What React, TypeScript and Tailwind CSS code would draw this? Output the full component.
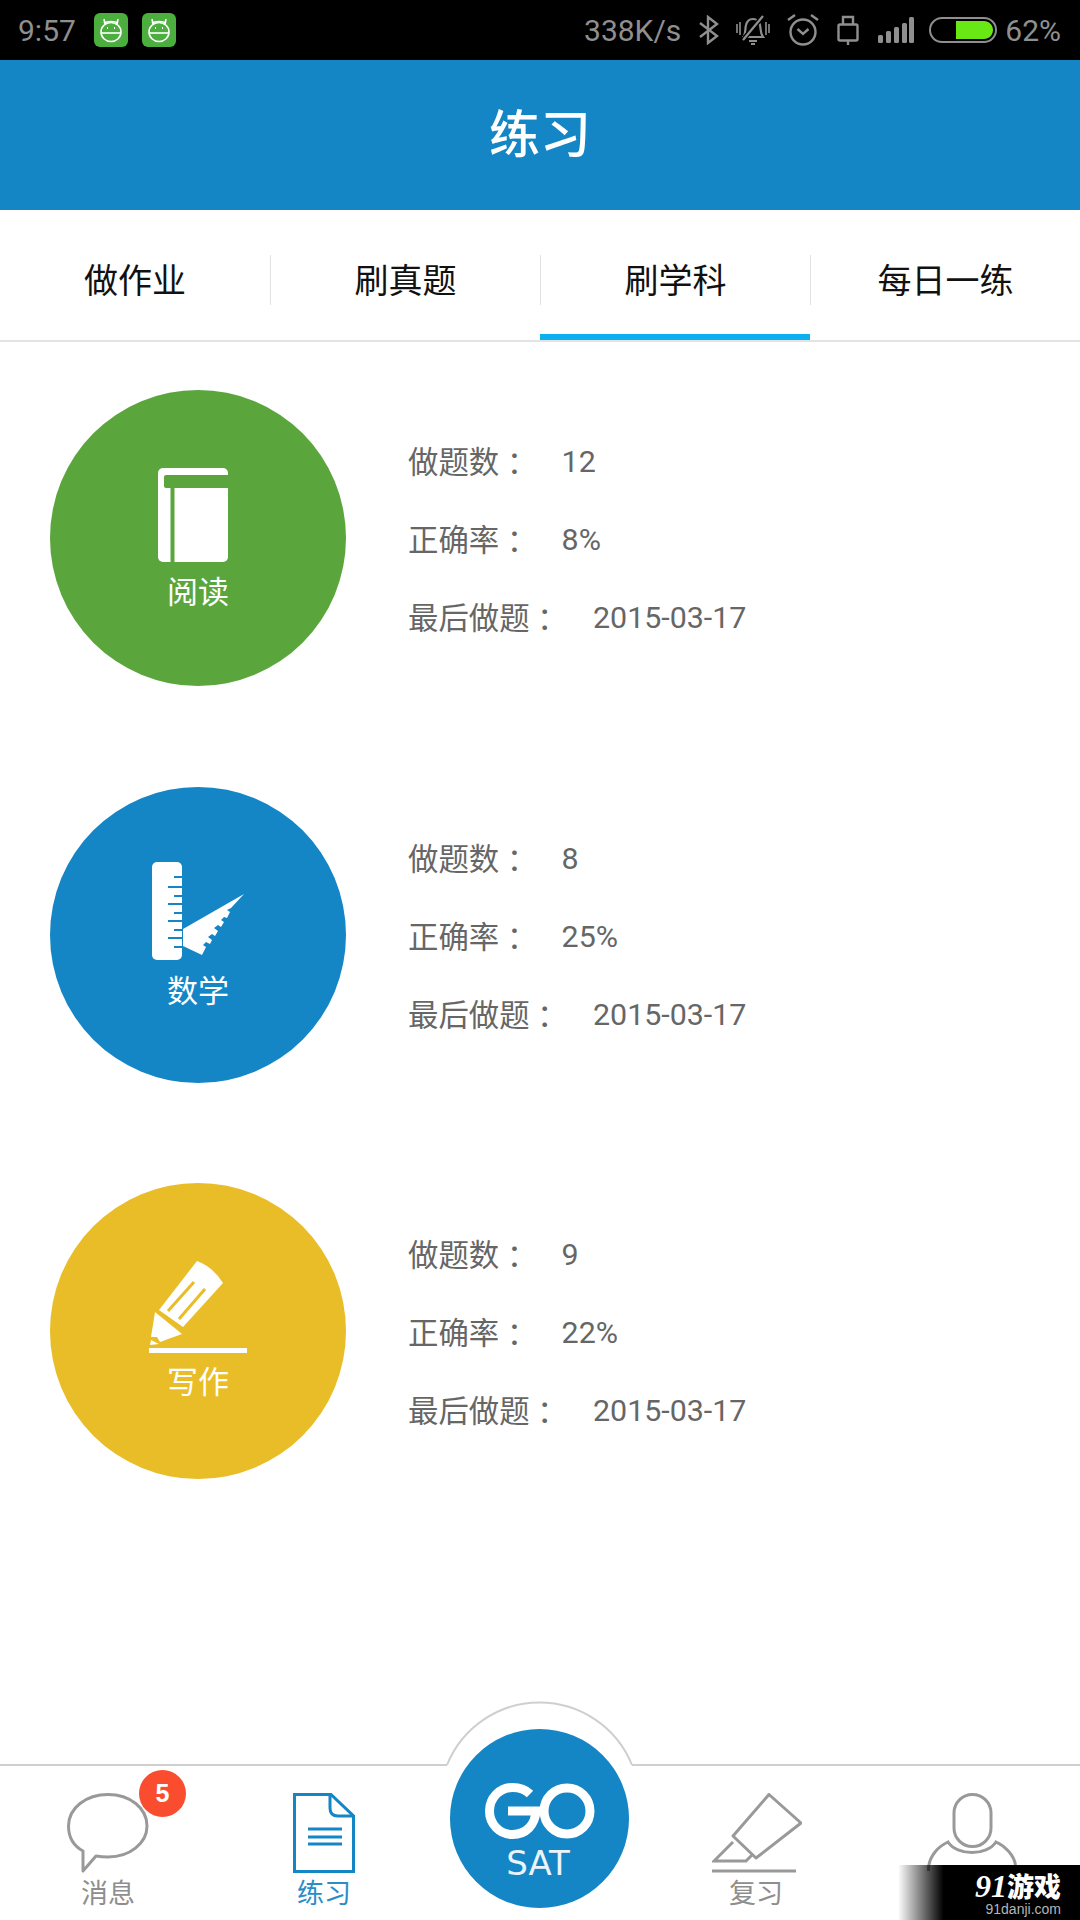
import React from "react";

const Bluetooth = () => (
  <svg width="21" height="30" viewBox="0 0 21 30" fill="none" stroke="#8f8f8f" strokeWidth="2.4" className="ml-[17px]">
    <path d="M2 8 L19 21 L10 28 V2 L19 9 L2 22" />
  </svg>
);
const Bell = () => (
  <svg width="34" height="31" viewBox="0 0 34 31" fill="none" stroke="#8f8f8f" strokeWidth="2.2" className="ml-[17px]">
    <path d="M8 21 C10 17 9 13 10 10 C11 6 14 4 17 4 C20 4 23 6 24 10 C25 14 24 18 27 22 H6" />
    <path d="M13 26 H21 M15 29 H19" />
    <path d="M1 9 V18 M4 7 V20 M30 7 V20 M33 9 V18" strokeWidth="1.6" />
    <path d="M6 26 L27 1" stroke="#000" strokeWidth="5" />
    <path d="M7 25 L27 1" />
  </svg>
);
const Alarm = () => (
  <svg width="32" height="32" viewBox="0 0 32 32" fill="none" stroke="#8f8f8f" strokeWidth="2.4" className="ml-[17px]">
    <circle cx="16" cy="18" r="12.5" />
    <path d="M10.5 15 L16 20 L21.5 15" />
    <path d="M1 6 L8 1 M31 6 L24 1" />
  </svg>
);
const Lock = () => (
  <svg width="22" height="30" viewBox="0 0 22 30" fill="none" stroke="#8f8f8f" strokeWidth="2.4" className="ml-[18px]">
    <rect x="1.5" y="9.5" width="19" height="16" rx="1.5" />
    <path d="M6 9 V2 H16 V9" />
    <path d="M11 26 V30" />
  </svg>
);
const Signal = () => (
  <svg width="36" height="26" viewBox="0 0 36 26" fill="#8f8f8f" className="ml-[19px]">
    <rect x="0" y="18" width="5" height="8" rx="1.5" />
    <rect x="8" y="14" width="5" height="12" rx="1.5" />
    <rect x="16" y="10" width="5" height="16" rx="1.5" />
    <rect x="24" y="6" width="5" height="20" rx="1.5" />
    <rect x="31" y="0" width="5" height="26" rx="1.5" />
  </svg>
);
const Battery = () => (
  <svg width="68" height="26" viewBox="0 0 68 26" fill="none" className="ml-[15px]">
    <rect x="1" y="1" width="66" height="24" rx="12" stroke="#8f8f8f" strokeWidth="2" />
    <path d="M27 4 H55 C60 4 64 8 64 13 C64 18 60 22 55 22 H27 Z" fill="#68e814" />
  </svg>
);
const AppBadge = ({ className }: { className: string }) => (
  <div className={`w-[34px] h-[34px] rounded-[6px] bg-[#4cae3e] flex items-center justify-center ${className}`}>
    <svg width="24" height="26" viewBox="0 0 24 26" fill="none" stroke="#fff" strokeWidth="1.6">
      <path d="M6 7 L5 2 M18 7 L19 2" />
      <path d="M5 6 C8 4 16 4 19 6" />
      <ellipse cx="12" cy="15" rx="10" ry="9.5" />
      <path d="M2 16 H22" />
      <path d="M8 11 H9 M15 11 H16" strokeWidth="2" />
    </svg>
  </div>
);

const BookIcon = () => (
  <svg width="70" height="94" viewBox="0 0 70 94" className="mr-[11px]">
    <rect width="70" height="94" rx="5" fill="#fff" />
    <path d="M8 7 H70 V20 H16.5 V94 H12.5 V20 H8 Q6 20 6 18 V9 Q6 7 8 7 Z" fill="#5aa63d" />
  </svg>
);
const MathIcon = () => (
  <svg width="92" height="98" viewBox="0 0 92 98">
    <rect width="30" height="98" rx="5" fill="#fff" />
    <g fill="#1485c5">
      <rect x="22" y="14" width="8" height="2" />
      <rect x="16" y="24" width="14" height="2" />
      <rect x="22" y="33" width="8" height="2" />
      <rect x="16" y="41" width="14" height="2" />
      <rect x="22" y="50" width="8" height="2" />
      <rect x="16" y="58" width="14" height="2" />
      <rect x="22" y="67" width="8" height="2" />
      <rect x="16" y="75" width="14" height="2" />
      <rect x="22" y="84" width="8" height="2" />
    </g>
    <path d="M92 32 L31 67 V84 L50 93 L54 85 L51 83 L54 80 L58 82 L60 78 L56 75 L60 72 L63 74 L66 69 L62 66 L66 63 L69 65 L72 60 L69 58 L72 55 L75 56 L78 50 L75 48 L79 46 Z" fill="#fff" />
  </svg>
);
const PencilIcon = () => (
  <svg width="98" height="92" viewBox="0 0 98 92">
    <path d="M48 0 Q64 6 74 22 L34 66 L10 49 Z" fill="#fff" />
    <path d="M45 21 L19 50 M56 28 L30 58" stroke="#e9bd27" strokeWidth="3" fill="none" />
    <path d="M6 51 L33 73 L11 81 L8 76 L2 76 Z" fill="#fff" />
    <path d="M2 79 L10 83 L1 84 Z" fill="#fff" />
    <rect x="0" y="87" width="98" height="5" fill="#fff" />
  </svg>
);

const subjects = [
  { bg: "bg-[#5aa63d]", label: "阅读", pad: "pt-[78px]", gap: "mt-[13px]", icon: <BookIcon />, count: "12", rate: "8%" },
  { bg: "bg-[#1485c5]", label: "数学", pad: "pt-[75px]", gap: "mt-[14px]", icon: <MathIcon />, count: "8", rate: "25%" },
  { bg: "bg-[#e9bd27]", label: "写作", pad: "pt-[78px]", gap: "mt-[12px]", icon: <PencilIcon />, count: "9", rate: "22%" },
];

const NavLabel = ({ text, color }: { text: string; color: string }) => (
  <span className={`text-[27px] leading-[30px] mt-[6px] ${color}`}>{text}</span>
);

const Colon = () => <span className="leading-none align-[-2px] font-['Noto_Sans_CJK_TC',sans-serif]">：</span>;

const StatRow = ({ label, value, gap }: { label: string; value: string; gap: string }) => (
  <div className="flex items-center h-[78px]">
    <span className="leading-[40px] mt-[2px]">{label}<Colon /></span>
    <span className={`leading-[40px] ${gap}`}>{value}</span>
  </div>
);

export default function App() {
  return (
    <div className="relative w-[1080px] h-[1920px] overflow-hidden bg-white flex flex-col font-[Roboto,'Noto_Sans_CJK_SC',sans-serif]">
      {/* status bar */}
      <div className="h-[60px] bg-black flex items-center pl-[18px] pr-[19px] text-[#8f8f8f] text-[30px]">
        <span className="w-[59px]">9:57</span>
        <AppBadge className="ml-[17px]" />
        <AppBadge className="ml-[14px]" />
        <span className="ml-auto">338K/s</span>
        <Bluetooth />
        <Bell />
        <Alarm />
        <Lock />
        <Signal />
        <Battery />
        <span className="ml-[8px]">62%</span>
      </div>

      {/* header */}
      <div className="h-[150px] bg-[#1485c5] flex items-center justify-center text-white text-[51px] font-medium pt-[3px]">练习</div>

      {/* tabs */}
      <div className="h-[132px] flex border-b-[2px] border-[#e3e3e3] pt-[45px]">
        {["做作业", "刷真题", "刷学科", "每日一练"].map((t, i) => (
          <div key={t} className="relative w-[270px] h-[85px]">
            <div className={`h-[50px] flex items-center justify-center text-[34px] text-[#111] pt-[3px] ${i > 0 ? "border-l border-[#e2e2e2]" : ""}`}>{t}</div>
            {i === 2 && <div className="absolute left-0 right-0 bottom-0 h-[6px] bg-[#0cb0ef]" />}
          </div>
        ))}
      </div>

      {/* subject list */}
      <div className="flex-1 flex flex-col pt-[48px] pl-[50px] gap-[100.5px]">
        {subjects.map((s) => (
          <div key={s.label} className="flex items-center">
            <div className={`w-[296px] h-[296px] rounded-full ${s.bg} flex flex-col items-center ${s.pad}`}>
              {s.icon}
              <span className={`text-[31px] leading-[36px] text-white ${s.gap}`}>{s.label}</span>
            </div>
            <div className="ml-[62px] mt-[4px] text-[30.4px] text-[#666]">
              <StatRow label="做题数" value={s.count} gap="ml-[32px]" />
              <StatRow label="正确率" value={s.rate} gap="ml-[32px]" />
              <StatRow label="最后做题" value="2015-03-17" gap="ml-[33px]" />
            </div>
          </div>
        ))}
      </div>

      {/* bottom nav */}
      <div className="h-[156px] border-t-[2px] border-[#cfcfcf] grid grid-cols-5 pt-[27px]">
        <div className="relative flex flex-col items-center">
          <svg width="82" height="80" viewBox="0 0 82 80" fill="none" stroke="#999" strokeWidth="3">
            <path d="M16 78 L16 58 C5 52 1.5 43 1.5 33 C1.5 15 19 1.5 41 1.5 C63 1.5 80 15 80 33 C80 50 63 64 41 64 C36 64 32 63.5 29 63 Z" strokeLinejoin="round" />
          </svg>
          <NavLabel text="消息" color="text-[#8e8e8e]" />
          <div className="absolute left-[139px] top-[-23px] w-[47px] h-[47px] rounded-full bg-[#fa4d30] flex items-center justify-center text-white text-[25px] font-bold font-['Liberation_Sans',sans-serif]">5</div>
        </div>
        <div className="flex flex-col items-center">
          <svg width="62" height="80" viewBox="0 0 62 80" fill="none" stroke="#1485c5" strokeWidth="3">
            <path d="M1.5 1.5 H38 L60.5 23 V78.5 H1.5 Z" />
            <path d="M37 2 V15 Q37 23 45 23 H60" />
            <path d="M15 36 H49 M15 44 H49 M15 51 H49" />
          </svg>
          <NavLabel text="练习" color="text-[#2a8dc9]" />
        </div>
        <div />
        <div className="flex flex-col items-center">
          <svg width="90" height="80" viewBox="0 0 90 80" fill="none" stroke="#999" strokeWidth="3" className="ml-[2px]">
            <path d="M57 1.5 L89 30 L44 65 L21 43 Z" strokeLinejoin="round" />
            <path d="M21 49 L2 68 H34 L40 62" />
            <path d="M0 78 H84" />
          </svg>
          <NavLabel text="复习" color="text-[#8e8e8e]" />
        </div>
        <div className="flex flex-col items-center">
          <svg width="90" height="80" viewBox="0 0 90 80" fill="none" stroke="#999" strokeWidth="3">
            <rect x="27" y="1.5" width="37" height="52" rx="18.5" />
            <path d="M1.5 78 V74 C3 62 12 53 21 49 C30 63 60 63 69 49 C78 53 87 62 88.5 72" />
          </svg>
        </div>
      </div>

      {/* raised centre button */}
      <svg className="absolute left-[440px] top-[1700px]" width="200" height="70" viewBox="0 0 200 70" fill="#fff">
        <path d="M7 65 A99.7 99.7 0 0 1 192 65 V70 H7 Z" stroke="none" />
        <path d="M7 65 A99.7 99.7 0 0 1 192 65" fill="none" stroke="#cfcfcf" strokeWidth="2" />
      </svg>
      <div className="absolute left-[450px] top-[1729px] w-[179px] h-[179px] rounded-full bg-[#1485c5] flex flex-col items-center pt-[54px]">
        <svg width="110" height="56" viewBox="0 0 110 56" fill="none" stroke="#fff" strokeWidth="9">
          <circle cx="82" cy="28" r="23" />
          <path d="M45 11 C40 6 34 4.5 27.5 4.5 C14.5 4.5 4.5 15 4.5 28 C4.5 41 14.5 51.5 27.5 51.5 C41 51.5 50 42 51 28 H23" />
        </svg>
        <span className="text-[34px] leading-[34px] mt-[7px] mr-[3px] text-[#eaf4fa] font-['DejaVu_Sans',sans-serif]">SAT</span>
      </div>

      {/* watermark */}
      <div className="absolute right-0 bottom-0 w-[182px] h-[55px] bg-gradient-to-r from-transparent to-black to-[25%] flex flex-col items-end pr-[19px] pt-[8px] text-white">
        <span className="text-[27px] leading-[26px] font-black"><span className="italic font-['Liberation_Serif',serif] text-[32px] leading-[26px]">91</span>游戏</span>
        <span className="text-[14px] leading-[16px] text-[#b5b5b5] font-['Liberation_Sans',sans-serif]">91danji.com</span>
      </div>
    </div>
  );
}
